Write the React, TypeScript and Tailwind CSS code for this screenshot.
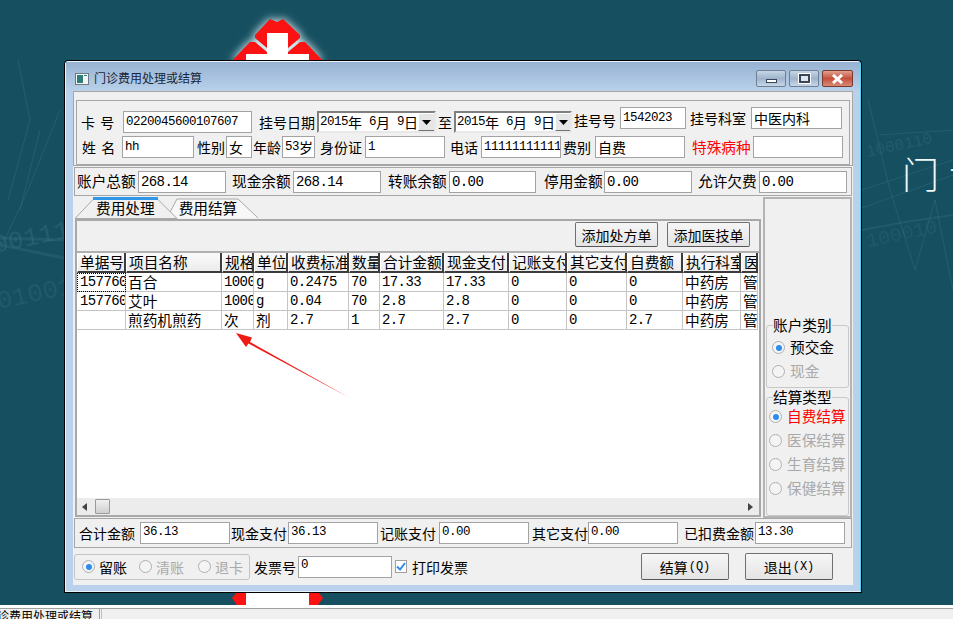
import React from "react";

const mono = "[font-family:'Liberation_Mono',monospace]";
const smallNum = mono + " text-[12.5px] tracking-[-0.5px]";
const bigNum = mono + " text-[14px] tracking-[-0.6px]";

function Lbl({ className = "", children }: { className?: string; children: React.ReactNode }) {
  return <div className={"h-[22px] flex items-center whitespace-nowrap leading-none shrink-0 " + className}>{children}</div>;
}

function Field({ className = "", children, num, big }: { className?: string; children?: React.ReactNode; num?: boolean; big?: boolean }) {
  return (
    <div className={"h-[22px] shrink-0 bg-white border border-[#a3a3a3] flex items-center pl-[2px] overflow-hidden whitespace-nowrap leading-none " + (num ? (big ? bigNum : smallNum) + " " : "") + className}>
      {children}
    </div>
  );
}

function DateBox({ className = "", m, d }: { className?: string; m: string; d: string }) {
  return (
    <div className={"h-[22px] shrink-0 bg-white border-2 border-t-[#7f7f7f] border-l-[#7f7f7f] border-r-[#e8e8e8] border-b-[#e8e8e8] flex items-center justify-between pl-[1px] leading-none overflow-hidden whitespace-nowrap " + className}>
      <span className="flex items-center">
        <span className={smallNum}>2015</span>
        <span className="text-[14px]">年</span>
        <span className={smallNum + " ml-[7px]"}>{m}</span>
        <span className="text-[14px]">月</span>
        <span className={smallNum + " ml-[7px]"}>{d}</span>
        <span className="text-[14px]">日</span>
      </span>
      <span className="w-[17px] h-[18px] shrink-0 bg-[#e6e6e6] border border-t-white border-l-white border-r-[#707070] border-b-[#707070] flex items-center justify-center">
        <svg width="9" height="5" viewBox="0 0 9 5"><path d="M0 0h9L4.5 5z" fill="#000" /></svg>
      </span>
    </div>
  );
}

function Radio({ on, disabled, wide, className = "", children }: { on?: boolean; disabled?: boolean; wide?: boolean; className?: string; children: React.ReactNode }) {
  return (
    <div className={"flex items-center leading-none whitespace-nowrap h-[24px] " + (wide ? "gap-[5px] " : "gap-[4px] ") + (disabled ? "text-[#a9a9a9] " : "") + className}>
      <span className="w-[13px] h-[13px] shrink-0 rounded-full border border-[#b0b0b0] bg-[#f4f4f4] flex items-center justify-center">
        {on && <span className="w-[6px] h-[6px] rounded-full bg-[#2d8cf0]" />}
      </span>
      {children}
    </div>
  );
}

function Btn({ className = "", children }: { className?: string; children: React.ReactNode }) {
  return (
    <div className={"shrink-0 flex items-center justify-center leading-none whitespace-nowrap rounded-[2px] border border-[#707070] border-b-[#555] bg-gradient-to-b from-[#f6f6f6] to-[#e4e4e4] " + className}>
      {children}
    </div>
  );
}

const cols = "grid grid-cols-[49px_96px_32px_34px_61px_31px_64px_65px_58px_60px_56px_58px_17px]";
const heads = ["单据号", "项目名称", "规格", "单位", "收费标准", "数量", "合计金额", "现金支付", "记账支付", "其它支付", "自费额", "执行科室", "医"];
const rows = [
  ["157760", "百合", "1000", "g", "0.2475", "70", "17.33", "17.33", "0", "0", "0", "中药房", "管"],
  ["157760", "艾叶", "1000", "g", "0.04", "70", "2.8", "2.8", "0", "0", "0", "中药房", "管"],
  ["", "煎药机煎药", "次", "剂", "2.7", "1", "2.7", "2.7", "0", "0", "2.7", "中药房", "管"],
];

function Cell({ v, focus, lead }: { v: string; focus?: boolean; lead?: boolean }) {
  const latin = /^[0-9.g]*$/.test(v);
  return (
    <div className={"h-[19px] border-r border-b border-[#c4c4c4] flex items-center overflow-hidden whitespace-nowrap leading-none " + (lead ? "pl-[3px] " : "pl-[2px] ") + (latin ? bigNum + " " : "text-[14.67px] ") + (focus ? "outline-1 outline-dotted outline-black -outline-offset-1" : "")}>
      {v}
    </div>
  );
}

function Backdrop() {
  return (
    <>
      <svg className="absolute left-0 top-0" width="953" height="619" viewBox="0 0 953 619" fill="none">
        <g stroke="#3f7c8a" strokeOpacity="0.35" strokeWidth="1">
          <path d="M8 200 L30 120 L18 60 M0 250 L28 190 L60 110 M20 210 L40 130" />
          <path d="M0 245 L64 258 M0 238 L64 240" strokeWidth="3" strokeOpacity="0.25" />
          <path d="M868 100 L890 190 L915 270 L935 200 L953 290 M880 135 L953 130 M862 190 L953 160 M862 208 L953 175" />
          <path d="M862 230 L905 222 L953 215" strokeWidth="2" strokeOpacity="0.25" />
        </g>
        <defs>
          <filter id="glow" x="-30%" y="-30%" width="160%" height="160%">
            <feGaussianBlur stdDeviation="4" />
          </filter>
        </defs>
        <path d="M231 61 L249 41 L254 41 L254 34 L270 18 L277 21 L283 18 L301 34 L301 41 L306 41 L324 61 Z" fill="#cfe7ea" filter="url(#glow)" />
        <path d="M232 61 L246 46 L250 42 L255 42 L267 52 L267 54 L246 54 L246 61 Z" fill="#fb1212" />
        <path d="M323 61 L309 46 L305 42 L300 42 L288 52 L288 54 L309 54 L309 61 Z" fill="#fb1212" />
        <path d="M255 35 L270 19 L277 22 L283 19 L300 35 L300 38 L288 48 L288 33 L267 33 L267 48 L255 38 Z" fill="#fb1212" />
        <path d="M267 33 H288 V54 H309 V61 H246 V54 H267 Z" fill="#fff" />
        <path d="M232 598 L237 592 H246 V605 H237 Z" fill="#fb1212" />
        <path d="M323 598 L318 592 H309 V605 H318 Z" fill="#fb1212" />
        <rect x="246" y="592" width="63" height="13" fill="#fff" />
      </svg>
      <div className={"absolute left-[-8px] top-[222px] -rotate-12 text-[26px] leading-none text-[#3c7584] opacity-40 blur-[0.5px] whitespace-nowrap " + mono}>0011101</div>
      <div className={"absolute left-[-4px] top-[278px] -rotate-12 text-[26px] leading-none text-[#336c7b] opacity-40 blur-[0.5px] whitespace-nowrap " + mono}>0100110</div>
      <div className={"absolute left-[866px] top-[138px] -rotate-12 text-[16px] leading-none text-[#3c7584] opacity-35 blur-[0.5px] whitespace-nowrap " + mono}>1000110</div>
      <div className={"absolute left-[866px] top-[225px] -rotate-12 text-[20px] leading-none text-[#336c7b] opacity-35 blur-[0.5px] whitespace-nowrap " + mono}>100010</div>
      <div className="absolute left-[902px] top-[155px] text-[37px] leading-none text-[#f2f7f8] font-light whitespace-nowrap tracking-[10px]">门诊</div>
    </>
  );
}

function Arrow() {
  return (
    <svg className="absolute left-[230px] top-[325px] pointer-events-none" width="125" height="80" viewBox="230 325 125 80">
      <path d="M349 397.5 L250 342 L252 337.5 L236 333 L246 347 L248.5 343.5 Z" fill="#f01c14" />
    </svg>
  );
}

export default function App() {
  return (
    <div className="relative w-[953px] h-[619px] overflow-hidden bg-[#164f60] text-black text-[14px] [font-family:'Noto_Sans_CJK_SC',sans-serif]">
      <Backdrop />

      {/* taskbar */}
      <div className="absolute left-0 right-0 top-[605px] h-[14px] bg-[#f0f0f0] border-t-[3px] border-t-white overflow-hidden">
        <div className="border-t border-[#a0a0a0] h-full flex">
          <div className="w-[100px] h-full border-r border-[#a0a0a0] overflow-hidden relative">
            <span className="absolute right-[6px] top-[1px] text-[12px] leading-none whitespace-nowrap">门诊费用处理或结算</span>
          </div>
          <div className="w-[2px] h-full border-r border-[#c0c0c0]" />
        </div>
      </div>

      {/* window */}
      <div className="absolute left-[64px] top-[60px] w-[798px] h-[533px] border border-black rounded-t-[4px] overflow-hidden">
        <div className="w-full h-full border border-[#e8f2fa] border-r-[#55d0f0] rounded-t-[3px] bg-[#b9d1ea] flex flex-col">
          {/* title */}
          <div className="h-[29px] shrink-0 flex items-start bg-gradient-to-b from-[#97b2d2] to-[#b9d1ea] pl-[9px]">
            <svg className="mt-[11px] shrink-0" width="14" height="12" viewBox="0 0 14 12">
              <rect x="0.5" y="0.5" width="13" height="11" fill="#f4f4f4" stroke="#6d7a85" />
              <rect x="2" y="2" width="6" height="8" fill="#2e7d78" />
              <rect x="9" y="2" width="3" height="1" fill="#2e7d78" />
            </svg>
            <span className="ml-[5px] mt-[10px] text-[12px] leading-none text-[#16263a] whitespace-nowrap">门诊费用处理或结算</span>
            <div className="ml-auto mr-[7px] mt-[8px] flex gap-[3px]">
              <div className="w-[30px] h-[17px] rounded-[2px] border border-[#6f8094] bg-gradient-to-b from-[#c8d6e6] via-[#9fb4cc] to-[#c6d6e8] flex items-end justify-center pb-[3px]">
                <span className="w-[11px] h-[4px] bg-white border border-[#3a4656]" />
              </div>
              <div className="w-[30px] h-[17px] rounded-[2px] border border-[#6f8094] bg-gradient-to-b from-[#c8d6e6] via-[#9fb4cc] to-[#c6d6e8] flex items-center justify-center">
                <span className="w-[11px] h-[9px] border-2 border-[#3a4656] bg-[#dfe8f2] outline-1 outline-white" />
              </div>
              <div className="w-[31px] h-[17px] rounded-[2px] border border-[#7a3a30] bg-gradient-to-b from-[#e0a08f] via-[#c4503c] to-[#d88a74] flex items-center justify-center">
                <svg width="13" height="10" viewBox="0 0 13 10"><path d="M2 1 L11 9 M11 1 L2 9" stroke="#fff" strokeWidth="3" /></svg>
              </div>
            </div>
          </div>

          {/* client */}
          <div className="mx-[7px] w-[780px] h-[494px] bg-[#f0f0f0] flex flex-col">
            {/* registration */}
            <div className="h-[75px] shrink-0 border border-[#a6a6a6] pt-[8px] px-[2px]">
              <div className="h-[65px] border border-[#a6a6a6]">
                <div className="flex items-start mt-[6px] h-[26px]">
                  <Lbl className="w-[46px] pl-[4px] mt-[4px] tracking-[1px]">卡 号</Lbl>
                  <Field num className="w-[129px] mt-[4px]">0220045600107607</Field>
                  <Lbl className="w-[58px] ml-[7px] mt-[4px]">挂号日期</Lbl>
                  <DateBox className="w-[119px] mt-[4px]" m="6" d="9" />
                  <Lbl className="w-[18px] pl-[2px] mt-[4px]">至</Lbl>
                  <DateBox className="w-[118px] mt-[4px]" m="6" d="9" />
                  <Lbl className="w-[48px] pl-[2px] mt-[2px]">挂号号</Lbl>
                  <Field num className="w-[66px]">1542023</Field>
                  <Lbl className="w-[65px] pl-[4px]">挂号科室</Lbl>
                  <Field className="w-[91px] text-[14px]">中医内科</Field>
                </div>
                <div className="flex items-start mt-[3px]">
                  <Lbl className="w-[45px] pl-[5px] tracking-[1px]">姓 名</Lbl>
                  <Field num className="w-[72px]">hh</Field>
                  <Lbl className="w-[32px] pl-[3px]">性别</Lbl>
                  <Field className="w-[26px]">女</Field>
                  <Lbl className="w-[30px] pl-[1px]">年龄</Lbl>
                  <Field className="w-[33px]"><span className={smallNum}>53</span>岁</Field>
                  <Lbl className="w-[50px] pl-[5px]">身份证</Lbl>
                  <Field num className="w-[80px]">1</Field>
                  <Lbl className="w-[36px] pl-[5px]">电话</Lbl>
                  <Field num className="w-[80px]">11111111111</Field>
                  <Lbl className="w-[34px] pl-[2px]">费别</Lbl>
                  <Field className="w-[90px]">自费</Field>
                  <Lbl className="w-[68px] pl-[7px] text-[#ff0000] text-[14.67px]">特殊病种</Lbl>
                  <Field className="w-[90px]" />
                </div>
              </div>
            </div>

            {/* account */}
            <div className="h-[29px] shrink-0 mt-[1px] mx-[1px] border border-[#a6a6a6] flex items-center text-[14.67px]">
              <Lbl className="w-[63px] pl-[2px]">账户总额</Lbl>
              <Field num big className="w-[88px]">268.14</Field>
              <Lbl className="w-[67px] pl-[6px]">现金余额</Lbl>
              <Field num big className="w-[88px]">268.14</Field>
              <Lbl className="w-[68px] pl-[7px]">转账余额</Lbl>
              <Field num big className="w-[87px]">0.00</Field>
              <Lbl className="w-[68px] pl-[8px]">停用金额</Lbl>
              <Field num big className="w-[88px]">0.00</Field>
              <Lbl className="w-[67px] pl-[6px]">允许欠费</Lbl>
              <Field num big className="w-[88px]">0.00</Field>
            </div>

            {/* middle */}
            <div className="h-[322px] shrink-0 flex">
              <div className="w-[688px] shrink-0 pl-[2px] pt-[1px] flex flex-col">
                <div className="relative h-[22px] shrink-0 flex text-[14.67px] leading-none">
                  <svg className="absolute left-0 top-0" width="190" height="22" viewBox="0 0 190 22" fill="none">
                    <path d="M92 21 L102 2 H163 L183 21" fill="#f8f8f8" stroke="#a8a8a8" />
                    <path d="M0 21.5 L18 2.5 H83 L102 21.5 Z" fill="#f0f0f0" stroke="#a8a8a8" />
                    <rect x="18" y="0" width="65" height="3" fill="#2f97e8" />
                  </svg>
                  <span className="relative ml-[21px] mt-[4px]">费用处理</span>
                  <span className="relative ml-[24px] mt-[4px]">费用结算</span>
                </div>
                <div className="h-[298px] w-[686px] shrink-0 border-2 border-[#a8a8a8] flex flex-col">
                  <div className="h-[32px] shrink-0 flex items-start justify-end gap-[9px] pt-[1px] pr-[9px] border-b-2 border-[#b0b0b0]">
                    <Btn className="w-[83px] h-[25px]">添加处方单</Btn>
                    <Btn className="w-[83px] h-[25px]">添加医技单</Btn>
                  </div>
                  <div className="flex-1 min-h-0 bg-white flex flex-col overflow-hidden">
                    <div className={cols + " h-[20px] shrink-0"}>
                      {heads.map((h) => (
                        <div key={h} className="bg-gradient-to-b from-[#fafafa] to-[#ececec] border-r-2 border-b-2 border-[#3c3c3c] border-l border-l-white pl-[2px] flex items-center overflow-hidden whitespace-nowrap leading-none text-[14.67px]">
                          {h}
                        </div>
                      ))}
                    </div>
                    {rows.map((r, i) => (
                      <div key={i} className={cols + " shrink-0"}>
                        {r.map((v, j) => (
                          <Cell key={j} v={v} lead={j === 0} focus={i === 0 && j === 0} />
                        ))}
                      </div>
                    ))}
                    <div className="flex-1" />
                    <div className="h-[17px] shrink-0 bg-[#ececec] flex items-center pl-[5px] pr-[6px]">
                      <svg width="5" height="8" viewBox="0 0 5 8"><path d="M5 0v8L0 4z" fill="#444" /></svg>
                      <span className="ml-[8px] w-[15px] h-[15px] rounded-[1px] border border-[#9a9a9a] bg-gradient-to-b from-[#f0f0f0] to-[#cfcfcf]" />
                      <svg className="ml-auto" width="5" height="8" viewBox="0 0 5 8"><path d="M0 0v8l5-4z" fill="#444" /></svg>
                    </div>
                  </div>
                </div>
              </div>

              <div className="w-[89px] h-[321px] shrink-0 mt-[1px] ml-[2px] border-2 border-[#b4b4b4] flex flex-col justify-end px-[1px] text-[14.67px]">
                <fieldset className="h-[70px] shrink-0 border border-[#c8c8c8] rounded-[3px] pl-[5px]">
                  <legend className="ml-[1px] leading-none">账户类别</legend>
                  <Radio on wide className="mt-[3px]">预交金</Radio>
                  <Radio disabled wide>现金</Radio>
                </fieldset>
                <fieldset className="h-[126px] shrink-0 mt-[2px] border border-[#c8c8c8] rounded-[3px] pl-[2px]">
                  <legend className="ml-[4px] leading-none">结算类型</legend>
                  <Radio on wide className="text-[#ff0000]">自费结算</Radio>
                  <Radio disabled wide>医保结算</Radio>
                  <Radio disabled wide>生育结算</Radio>
                  <Radio disabled wide>保健结算</Radio>
                </fieldset>
              </div>
            </div>

            {/* totals */}
            <div className="h-[30px] shrink-0 mx-[1px] border border-[#a6a6a6] flex items-center">
              <Lbl className="w-[65px] pl-[4px]">合计金额</Lbl>
              <Field num className="w-[90px] pb-[2px]">36.13</Field>
              <Lbl className="w-[58px] pl-[1px]">现金支付</Lbl>
              <Field num className="w-[90px] pb-[2px]">36.13</Field>
              <Lbl className="w-[61px] pl-[2px]">记账支付</Lbl>
              <Field num className="w-[90px] pb-[2px]">0.00</Field>
              <Lbl className="w-[59px] pl-[3px]">其它支付</Lbl>
              <Field num className="w-[90px] pb-[2px]">0.00</Field>
              <Lbl className="w-[77px] pl-[6px]">已扣费金额</Lbl>
              <Field num className="w-[90px] pb-[2px]">13.30</Field>
            </div>

            {/* actions */}
            <div className="flex-1 flex items-center pl-[1px]">
              <div className="w-[176px] h-[26px] shrink-0 rounded-[3px] border border-[#c4c4c4] flex items-center pl-[7px]">
                <Radio on className="w-[57px]">留账</Radio>
                <Radio disabled className="w-[59px]">清账</Radio>
                <Radio disabled>退卡</Radio>
              </div>
              <Lbl className="w-[48px] pl-[4px]">发票号</Lbl>
              <Field num className="w-[94px] pb-[2px]">0</Field>
              <span className="ml-[3px] w-[12px] h-[13px] shrink-0 border border-[#a0a0a0] bg-white flex items-center justify-center">
                <svg width="10" height="9" viewBox="0 0 10 9" fill="none"><path d="M1 4.5 L4 7.5 L9 1" stroke="#2d8cf0" strokeWidth="2" /></svg>
              </span>
              <span className="ml-[5px] leading-none whitespace-nowrap">打印发票</span>
              <Btn className="ml-auto w-[88px] h-[27px]">结算<span className={mono + " text-[12px] ml-[1px]"}>(Q)</span></Btn>
              <Btn className="ml-[16px] mr-[20px] w-[88px] h-[27px]">退出<span className={mono + " text-[12px] ml-[1px]"}>(X)</span></Btn>
            </div>
          </div>
        </div>
      </div>

      <Arrow />
    </div>
  );
}
